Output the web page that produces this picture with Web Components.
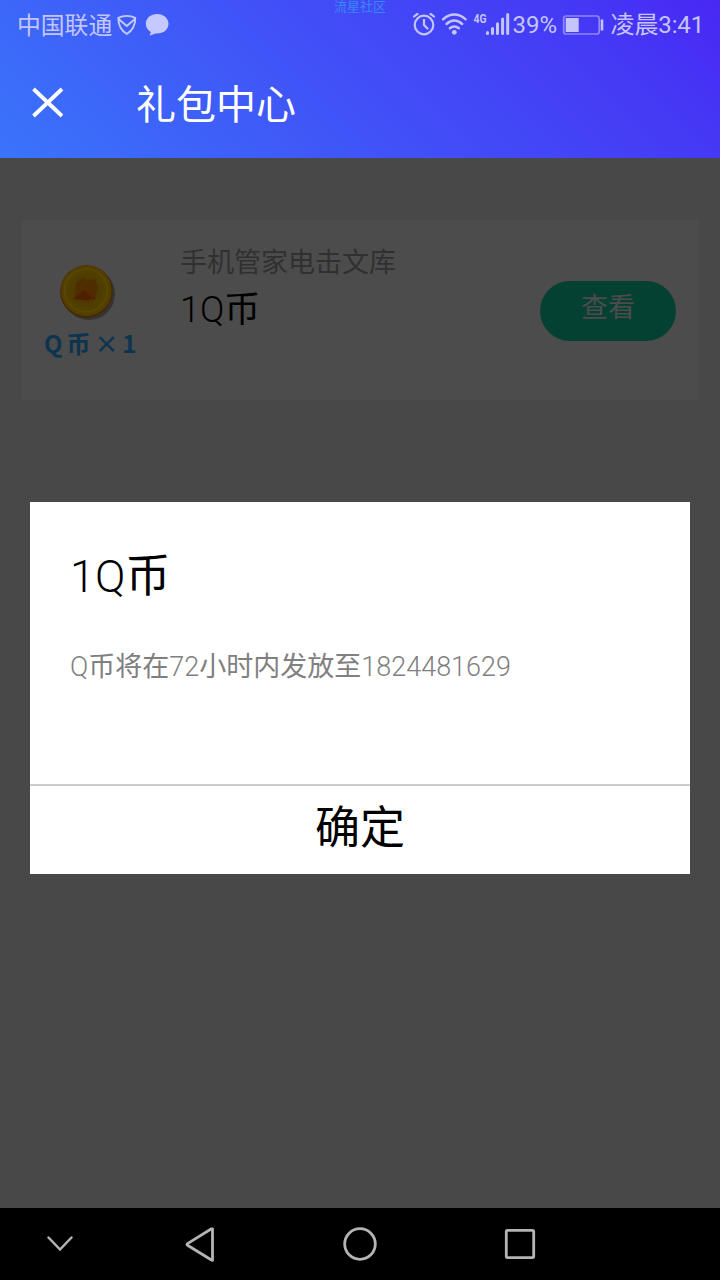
<!DOCTYPE html>
<html lang="zh-CN">
<head>
<meta charset="utf-8">
<title>礼包中心</title>
<style>
body{margin:0;background:#484848;font-family:Roboto,"Noto Sans CJK SC",sans-serif}
.l{font-weight:250}
</style>
</head>
<body>
<gift-app></gift-app>
<script>
const define=(name,html)=>{
  const t=document.createElement('template');t.innerHTML=html;
  customElements.define(name,class extends HTMLElement{
    constructor(){super();this.attachShadow({mode:'open'}).append(t.content.cloneNode(true));}
  });
};

define('status-bar',`<style>
:host{display:flex;height:48px;box-sizing:border-box;padding:0 16px 0 17px;justify-content:space-between;color:#c5c5fd;font-size:24px;line-height:51px;white-space:nowrap;position:relative}
div{display:flex}svg{display:block;flex:none}
.cn{font-size:23.800px;line-height:53px}.time{letter-spacing:-.15px}
.mark{position:absolute;left:334px;top:-3px;font-size:13px;line-height:19px;color:#348af4}
</style>
<div><span class="cn">中国联通</span><svg width="64" height="48" viewBox="112.200 0 64 48"><path d="M118.500 17.800Q127 14 135.500 17.800Q135.500 29 127 34Q118.500 29 118.500 17.800ZM118.800 19L127 26L135.200 19" fill="none" stroke="#c5c9fd" stroke-width="1.900" stroke-linejoin="round"/><path d="M157.300 14C150.800 14 146 18.300 146 23.800C146 27.400 148 30.500 151 32L149.900 35.800L155.500 33.500C163.500 34.100 168.700 29.700 168.700 23.800C168.700 18.300 163.800 14 157.300 14Z" fill="#c5c9fd"/></svg></div>
<span class="mark">流星社区</span>
<div><svg width="113" height="48" viewBox="400 0 113 48" fill="none" stroke="#c5c5fd" stroke-width="2.200" stroke-linecap="round"><circle cx="424" cy="25" r="9.300"/><path d="M424 19.800V25L427.500 28.500M414 16.500L417.500 13.800M434 16.500L430.500 13.800"/><path d="M443 19.300Q454.300 9.800 465.700 19.300M446.500 24Q454.300 17.200 462.200 24M449.800 28.300Q454.300 24.600 458.900 28.300" stroke-width="2.400"/><circle cx="454.300" cy="32.300" r="2.400" fill="#c5c5fd" stroke="none"/><path d="M487.500 32.500V33.400M492.500 28.500V33.400M497.500 23.700V33.400M502.600 18.900V33.400M507.700 14.500V33.400" stroke-width="3"/><text x="473.500" y="23" font-size="13.500" font-weight="700" textLength="13" lengthAdjust="spacingAndGlyphs" fill="#c5c5fd" stroke="none">4G</text></svg><span class="pc">39%</span><svg width="53.500" height="48" viewBox="557.300 0 53.500 48"><rect x="564" y="16" width="35.500" height="18" rx="2.500" fill="none" stroke="#8f86f9" stroke-width="1.700"/><path d="M566 18H579V32H566ZM601 19.500H603.600V30.500H601Z" fill="#c5c5fd"/></svg><span class="time">凌晨3:41</span></div>`);

define('page-header',`<style>
:host{display:block;height:158px;background:linear-gradient(45deg,#3a74fa 0%,#4150f7 48%,#4539f5 82%,#4828f4 100%)}
.bar{display:flex;height:110px}
svg{display:block}h1{margin:0 0 0 72px;font-size:40px;font-weight:400;line-height:115px;color:#fff}
</style><status-bar></status-bar><div class="bar"><svg width="64" height="110" viewBox="0 48 64 110"><path d="M33.500 89L62 116M62 89L33.500 116" stroke="#fff" stroke-width="3.800"/></svg><h1><slot></slot></h1></div>`);

define('coin-icon',`<style>:host{display:block;width:92px}svg{display:block;margin-left:14px}
div{font:700 24px/30px "Noto Sans CJK SC",sans-serif;color:#0c344f;white-space:nowrap;margin-top:4px;word-spacing:-1.500px}</style>
<svg width="62" height="62" viewBox="0 0 62 62"><defs><radialGradient id="g"><stop offset="0" stop-color="#4f2c00"/><stop offset=".5" stop-color="#4f3800"/><stop offset="1" stop-color="#514300"/></radialGradient></defs><circle cx="31" cy="32" r="26" fill="#353433"/><circle cx="28.500" cy="29.500" r="26.300" fill="#452700"/><circle cx="28.300" cy="28.700" r="25.300" fill="#533e00"/><circle cx="28" cy="28.500" r="21.500" fill="url(#g)" stroke="#5b4a00" stroke-width="1.200"/><path d="M18 21L25 16L29 19L37 17L40 24L37 36L29 40L23 35L15 38L18 30Z" fill="#4e2e00"/><path d="M16 37L27 27L38 37L26 38Z" fill="#501b00" opacity=".8"/><path d="M22 22L35 36" stroke="#5c3300" stroke-width="1"/></svg><div><slot></slot></div>`);

define('pill-button',`<style>:host{display:block;width:136px;height:60px;border-radius:30px;background:#054132;color:#4c4c4c;text-align:center;font-size:27px;line-height:54px}slot{position:relative;left:-.5px}</style><slot></slot>`);

define('gift-card',`<style>
:host{display:flex;box-sizing:border-box;height:180px;margin:62px 21px 0 22px;background:#4c4c4c;padding:0 23px 0 22px}
coin-icon{margin-top:42px}.txt{flex:1;margin:20px 0 0 44px}.s{font-size:27px;line-height:47px;color:#303030}.t{font-size:36px;line-height:46px;color:#000}
pill-button{margin-top:61px}</style>
<coin-icon><slot name="coin"></slot></coin-icon><div class="txt"><div class="s"><slot name="source"></slot></div><div class="t"><slot name="title"></slot></div></div><pill-button><slot name="action"></slot></pill-button>`);

define('modal-dialog',`<style>
:host{display:flex;flex-direction:column;height:372px;background:#fff}
.b{flex:1;padding:45px 40px 0}.t{font-size:45px;line-height:60px;color:#000}.m{font-size:27px;line-height:40px;margin-top:40px;color:#808080}
.a{height:88px;border-top:2px solid #ccc;text-align:center;font-size:45px;line-height:86px;color:#000}</style>
<div class="b"><div class="t"><slot name="title"></slot></div><div class="m"><slot></slot></div></div><div class="a"><slot name="action"></slot></div>`);

define('nav-bar',`<style>:host{display:block;height:72px;background:#000}svg{display:block}</style>
<svg width="720" height="72" fill="none" stroke="#b4b4b4" stroke-width="2.800" stroke-linejoin="round" stroke-linecap="round"><path d="M48.500 29.500L60 41.500L71.500 29.500" stroke-linejoin="miter" stroke-width="2.500"/><path d="M212.500 20.800V52.200Q212.500 52.800 211.500 52L187.500 37.200Q186.500 36.400 187.500 35.600L211.500 20.800Z"/><circle cx="360" cy="36" r="15.300"/><rect x="506.300" y="22.300" width="27.400" height="27.400" rx="1"/></svg>`);

define('gift-app',`<style>
:host{display:flex;flex-direction:column;width:720px;height:1280px;overflow:hidden;position:relative}
main{flex:1;background:#484848;overflow:hidden}
.l{font-weight:300}
modal-dialog{position:absolute;left:30px;right:30px;top:502px}</style>
<page-header>礼包中心</page-header>
<main><gift-card><span slot="coin">Q 币 × 1</span><span slot="source">手机管家电击文库</span><span slot="title"><span class="l">1Q</span>币</span><span slot="action">查看</span></gift-card></main>
<modal-dialog><span slot="title"><span class="l">1Q</span>币</span><span class="l">Q</span>币将在<span class="l">72</span>小时内发放至<span class="l">1824481629</span><span slot="action">确定</span></modal-dialog>
<nav-bar></nav-bar>`);
</script>
</body>
</html>
